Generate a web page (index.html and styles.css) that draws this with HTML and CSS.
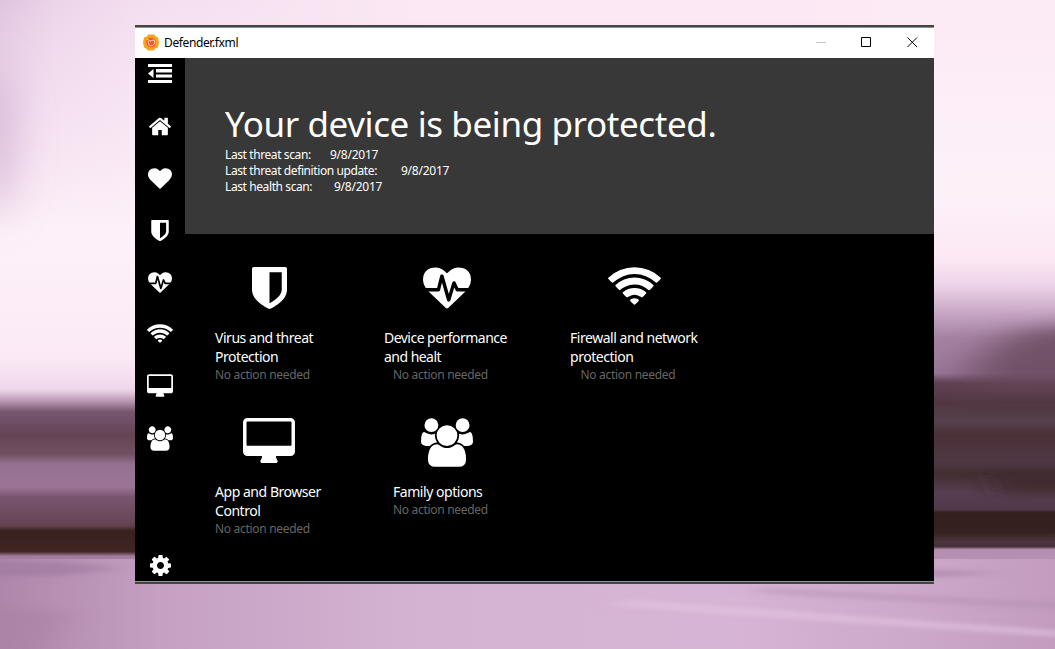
FILE: index.html
```html
<!DOCTYPE html>
<html lang="en">
<head>
<meta charset="utf-8">
<title>Defender.fxml</title>
<link rel="stylesheet" href="styles.css">
</head>
<body>
<svg width="0" height="0" class="defs" aria-hidden="true">
  <symbol id="shield" viewBox="256 128 1280 1536"><path d="M1344 960V320H896v1137q119-63 213-137 235-184 235-360zm192-768v768q0 86-33.5 170.5t-83 150-118 127.5-126.5 103-121 77.5-89.5 49.5-42.5 20q-12 6-26 6t-26-6q-16-7-42.5-20t-89.5-49.5-121-77.5-126.5-103-118-127.5-83-150T256 960V192q0-26 19-45t45-19h1152q26 0 45 19t19 45z"/></symbol>
  <symbol id="heart" viewBox="0 128 1792 1536"><path d="M896 1664q-26 0-44-18l-624-602q-10-8-27.5-26T145 952.500 77 855 23.500 734 0 596q0-220 127-344t351-124q62 0 126.500 21.500t120 58T820 276t76 68q36-36 76-68t95.500-68.500 120-58T1314 128q224 0 351 124t127 344q0 221-229 450l-623 600q-18 18-44 18z"/></symbol>
  <symbol id="pulse" viewBox="0 0 1792 1536"><path d="M1280 896h305q-5 6-10 10.500t-9 7.500l-3 4-623 600q-18 18-44 18t-44-18L228 916q-5-2-21-20h369q22 0 39.500-13.500T638 848l70-281 190 667q6 20 23 33t39 13q21 0 38-13t23-33l146-485 56 112q18 35 57 35zm512-428q0 145-103 300h-369L1210 547q-8-17-25-27t-36-8q-45 5-56 46l-129 430-196-686q-6-20-23.500-33t-39.500-13-39 13.500-22.500 34.500L526 768H103Q0 613 0 468q0-220 127-344T478 0q62 0 126.500 21.500t120 58T820 148t76 68q36-36 76-68t95.500-68.500 120-58T1314 0q224 0 351 124t127 344z"/></symbol>
  <symbol id="wifi" viewBox="42 128 1964 1395"><path d="M1024 1523q-20 0-93-73.500t-73-93.500q0-32 62.500-54t103.500-22 103.500 22 62.500 54q0 20-73 93.500t-93 73.500zm270-271q-2 0-40-25t-101.500-50-128.500-25-128.500 25-101 50-40.500 25q-18 0-93.500-75t-75.500-93q0-13 10-23 78-77 196-121t233-44 233 44 196 121q10 10 10 23 0 18-75.500 93t-93.500 75zm273-272q-11 0-23-8-136-105-252-154.500t-268-49.500q-85 0-170.500 22t-149 53T591 902t-79 53-31 25q-17 0-92-75t-75-93q0-12 10-22 132-132 320-205t380-73 380 73 320 205q10 10 10 22 0 18-75 93t-92 75zm271-271q-11 0-22-9-179-157-371.500-236.500T1024 384t-420.500 79.500T232 700q-11 9-22 9-17 0-92.500-75T42 541q0-13 10-23 187-186 445-288t527-102 527 102 445 288q10 10 10 23 0 18-75.500 93t-92.500 75z"/></symbol>
  <symbol id="desktop" viewBox="-64 0 1920 1664"><path d="M1728 992V160q0-13-9.500-22.500T1696 128H96q-13 0-22.500 9.500T64 160v832q0 13 9.500 22.500t22.500 9.500h1600q13 0 22.500-9.500t9.500-22.500zm128-832v1088q0 66-47 113t-113 47h-544q0 37 16 77.500t32 71 16 43.500q0 26-19 45t-45 19H640q-26 0-45-19t-19-45q0-14 16-44t32-70 16-78H96q-66 0-113-47t-47-113V160Q-64 94-17 47T96 0h1600q66 0 113 47t47 113z"/></symbol>
  <symbol id="users" viewBox="0 0 1920 1792"><path d="M593 896q-162 5-265 128H194q-82 0-138-40.500T0 865q0-353 124-353 6 0 43.500 21t97.500 42.500T384 597q67 0 133-23-5 37-5 66 0 139 81 256zm1071 637q0 120-73 189.500t-194 69.500H523q-121 0-194-69.500T256 1533q0-53 3.500-103.500t14-109T300 1212t43-97.500 62-81 85.500-53.500T602 960q10 0 43 21.500t73 48 107 48 135 21.500 135-21.500 107-48 73-48 43-21.500q61 0 111.500 20t85.500 53.500 62 81 43 97.500 26.500 108.500 14 109 3.500 103.500zM640 256q0 106-75 181t-181 75-181-75-75-181 75-181T384 0t181 75 75 181zm704 384q0 159-112.500 271.500T960 1024 688.500 911.500 576 640t112.500-271.500T960 256t271.500 112.500T1344 640zm576 225q0 78-56 118.500t-138 40.500h-134q-103-123-265-128 81-117 81-256 0-29-5-66 66 23 133 23 59 0 119-21.500t97.500-42.500 43.500-21q124 0 124 353zm-128-609q0 106-75 181t-181 75-181-75-75-181 75-181 181-75 181 75 75 181z"/></symbol>
  <symbol id="home" viewBox="90 256 1612 1280"><path d="M1472 992v480q0 26-19 45t-45 19h-384v-384H768v384H384q-26 0-45-19t-19-45V992q0-1 .5-3t.5-3l575-474 575 474q1 2 1 6zm223-69l-62 74q-8 9-21 11h-3q-13 0-21-7L896 424l-692 577q-12 8-24 7-13-2-21-11l-62-74q-8-10-7-23.500t11-21.500l719-599q32-26 76-26t76 26l244 204V288q0-14 9-23t23-9h192q14 0 23 9t9 23v408l219 182q10 8 11 21.500t-7 23.500z"/></symbol>
  <symbol id="cog" viewBox="128 128 1536 1536"><path d="M1152 896q0-106-75-181t-181-75-181 75-75 181 75 181 181 75 181-75 75-181zm512-109v222q0 12-8 23t-20 13l-185 28q-19 54-39 91 35 50 107 138 10 12 10 25t-9 23q-27 37-99 108t-94 71q-12 0-26-9l-138-108q-44 23-91 38-16 136-29 186-7 28-36 28H785q-14 0-24.500-8.500T749 1634l-28-184q-49-16-90-37l-141 107q-10 9-25 9-14 0-25-11-126-114-165-168-7-10-7-23 0-12 8-23 15-21 51-66.500t54-70.500q-27-50-41-99l-183-27q-13-2-21-12.500t-8-23.500V783q0-12 8-23t19-13l186-28q14-46 39-92-40-57-107-138-10-12-10-24 0-10 9-23 26-36 98.500-107.500T465 263q13 0 26 10l138 107q44-23 91-38 16-136 29-186 7-28 36-28h222q14 0 24.500 8.500T1043 158l28 184q49 16 90 37l142-107q9-9 24-9 13 0 25 10 129 119 165 170 7 8 7 22 0 12-8 23-15 21-51 66.500t-54 70.500q26 50 41 98l183 28q13 2 21 12.500t8 23.500z"/></symbol>
  <symbol id="outdent" viewBox="0 0 24 19"><path d="M0 0h24v3H0zM8 5h16v3.500H8zM8 10.500h16v3H8zM0 16h24v3H0zM5.500 5v9L0 9.500z"/></symbol>
</svg>
<svg class="wallpaper" viewBox="0 0 1055 649" preserveAspectRatio="none" aria-hidden="true">
  <defs>
    <linearGradient id="sky" x2="1" y2="0"><stop offset="0" stop-color="#e0c4df"/><stop offset=".05" stop-color="#ecd3e8"/><stop offset=".13" stop-color="#f3deef"/><stop offset=".4" stop-color="#fbe8f4"/><stop offset=".75" stop-color="#fce8f4"/><stop offset="1" stop-color="#fcedf7"/></linearGradient>
    <linearGradient id="left" x2="0" y2="1">
      <stop offset="0" stop-color="#fdf1f9" stop-opacity="0"/><stop offset=".15" stop-color="#fbeaf6" stop-opacity=".5"/><stop offset=".36" stop-color="#fdf1f9"/><stop offset=".55" stop-color="#fbeaf6"/><stop offset=".6" stop-color="#efd7eb"/><stop offset=".617" stop-color="#bd9bb8"/><stop offset=".634" stop-color="#765770"/><stop offset=".67" stop-color="#644454"/><stop offset=".7" stop-color="#735164"/><stop offset=".715" stop-color="#957191"/><stop offset=".75" stop-color="#9c7596"/><stop offset=".765" stop-color="#7b5670"/><stop offset=".81" stop-color="#644252"/><stop offset=".818" stop-color="#39211f"/><stop offset=".85" stop-color="#402523"/><stop offset=".857" stop-color="#a37c9e"/><stop offset="1" stop-color="#b990b6"/>
    </linearGradient>
    <linearGradient id="right" x2="0" y2="1">
      <stop offset="0" stop-color="#fceaf5"/><stop offset=".3" stop-color="#fdf1f8"/><stop offset=".4" stop-color="#fce8f4"/><stop offset=".44" stop-color="#edd3e8"/><stop offset=".48" stop-color="#c9a9c7"/><stop offset=".52" stop-color="#a583a4"/><stop offset=".575" stop-color="#9b789b"/><stop offset=".59" stop-color="#5e4153"/><stop offset=".62" stop-color="#513742"/><stop offset=".65" stop-color="#56404b"/><stop offset=".67" stop-color="#4a3037"/><stop offset=".71" stop-color="#503843"/><stop offset=".73" stop-color="#432e32"/><stop offset=".76" stop-color="#573e50"/><stop offset=".785" stop-color="#523849"/><stop offset=".79" stop-color="#33201e"/><stop offset=".82" stop-color="#35211f"/><stop offset=".835" stop-color="#4e3541"/><stop offset=".842" stop-color="#452f38"/><stop offset=".847" stop-color="#b48fb2"/><stop offset="1" stop-color="#c7a0c4"/>
    </linearGradient>
    <linearGradient id="ground" x2="1" y2="0"><stop offset="0" stop-color="#ae86ab"/><stop offset=".15" stop-color="#c5a0c3"/><stop offset=".4" stop-color="#d4b3d2"/><stop offset=".7" stop-color="#d6b4d5"/><stop offset=".88" stop-color="#cba7ca"/><stop offset="1" stop-color="#c39cc0"/></linearGradient>
    <filter id="soft" filterUnits="userSpaceOnUse" x="-200" y="-100" width="1500" height="900"><feGaussianBlur stdDeviation="22"/></filter>
    <filter id="streak" filterUnits="userSpaceOnUse" x="-100" y="200" width="1300" height="500"><feGaussianBlur stdDeviation="14 2.500"/></filter>
    <filter id="haze" filterUnits="userSpaceOnUse" x="800" y="200" width="500" height="300"><feGaussianBlur stdDeviation="26 9"/></filter>
  </defs>
  <path fill="url(#sky)" d="M0 0h1055v649H0z"/>
  <path fill="url(#left)" d="M0 0h300v649H0z"/>
  <path fill="url(#right)" d="M934 0h121v649H934z"/>
  <ellipse cx="-8" cy="140" rx="20" ry="75" fill="#c9a5c9" opacity=".7" filter="url(#soft)"/>
  <path fill="#654758" opacity=".8" filter="url(#haze)" d="M1160 318L1020 330 980 355 960 390h200z"/>
  <path fill="url(#ground)" d="M0 559h1055v90H0z"/>
  <g filter="url(#streak)">
    <path fill="#3c2623" opacity=".6" d="M990 475h120v20H1000z"/>
    <path fill="#a07a9f" opacity=".7" d="M-40 562H60l60 6-60 8H-40zM920 570l80 3-80 4z"/>
    <path fill="#a981a6" opacity=".55" d="M-40 605l110 8-40 50H-40z"/>
    <path fill="#b38db1" opacity=".6" d="M760 588l310 16v5L760 593z"/>
    <path fill="#e3c4e1" opacity=".75" d="M620 600l450 32v5L620 606z"/>
  </g>
</svg>
<main class="window">
  <header class="titlebar">
    <svg class="logo" viewBox="0 0 16 17"><path fill="#f5a51d" d="M5 .5h6l2 2 2 1 1 5-1 5-3 1-1 2H5l-2-2-2-1-1-5 1-5 3-1z"/><circle cx="8" cy="8.500" r="4.800" fill="#ef5a24"/><path fill="none" stroke="#fbe3d2" stroke-width=".9" d="M4 5l3 2 4-1 1 3-3 3-3-1-1-4"/></svg>
    <span class="title">Defender.fxml</span>
    <svg class="controls" viewBox="0 0 102 12" fill="none"><path stroke="#c6c6c6" d="M0 6.500h10"/><path stroke="#000" d="M45.500 1.500h9v9h-9z"/><path stroke="#000" d="M91.500 1.500l9.500 9.500M101 1.500L91.500 11"/></svg>
  </header>
  <div class="content">
    <nav class="sidebar">
      <a class="item raised"><svg width="24" height="19"><use href="#outdent"/></svg></a>
      <a class="item"><svg width="22" height="19"><use href="#home"/></svg></a>
      <a class="item"><svg width="24" height="21"><use href="#heart"/></svg></a>
      <a class="item"><svg width="18" height="21"><use href="#shield"/></svg></a>
      <a class="item"><svg width="24" height="21"><use href="#pulse"/></svg></a>
      <a class="item raised"><svg width="26" height="19"><use href="#wifi"/></svg></a>
      <a class="item raised"><svg width="26" height="23"><use href="#desktop"/></svg></a>
      <a class="item"><svg width="26" height="25"><use href="#users"/></svg></a>
      <a class="item settings"><svg width="21" height="21"><use href="#cog"/></svg></a>
    </nav>
    <div class="page">
      <section class="hero">
        <h1 class="headline">Your device is being protected.</h1>
        <div class="scan"><span class="w85">Last threat scan:</span><span class="date gap-s">9/8/2017</span></div>
        <div class="scan"><span class="w153">Last threat definition update:</span><span class="date gap-l">9/8/2017</span></div>
        <div class="scan"><span class="w86">Last health scan:</span><span class="date gap-l">9/8/2017</span></div>
      </section>
      <section class="tiles">
        <article class="tile"><div class="art"><svg width="35" height="42"><use href="#shield"/></svg></div><h2 class="name">Virus and threat<br>Protection</h2><p class="status">No action needed</p></article>
        <article class="tile"><div class="art"><svg width="48" height="42"><use href="#pulse"/></svg></div><h2 class="name device">Device performance<br>and healt</h2><p class="status">No action needed</p></article>
        <article class="tile"><div class="art"><svg width="53" height="38"><use href="#wifi"/></svg></div><h2 class="name firewall">Firewall and network<br>protection</h2><p class="status">No action needed</p></article>
        <article class="tile"><div class="art tall"><svg width="52" height="45"><use href="#desktop"/></svg></div><h2 class="name">App and Browser<br>Control</h2><p class="status">No action needed</p></article>
        <article class="tile"><div class="art tall"><svg width="52" height="49"><use href="#users"/></svg></div><h2 class="name">Family options</h2><p class="status">No action needed</p></article>
      </section>
    </div>
  </div>
</main>
</body>
</html>
```

FILE: styles.css
```css
* { box-sizing: border-box; }
body { margin: 0; width: 1055px; height: 649px; overflow: hidden; padding: 25px 0 0 135px; font-family: "Noto Sans", "Open Sans", sans-serif; }
.defs { position: absolute; }
.wallpaper { position: absolute; inset: 0; width: 1055px; height: 649px; z-index: -1; }
.window { width: 799px; height: 559px; display: flex; flex-direction: column; border-top: 2px solid #48414a; border-bottom: 2px solid #48414a; }
.titlebar { height: 31px; flex: none; display: flex; align-items: center; padding: 0 16px 2px 8px; background: #fff; border-top: 1px solid #82a35c; }
.logo { width: 16px; height: 17px; }
.title { margin-left: 5px; font-size: 12px; letter-spacing: -.38px; color: #000; }
.controls { width: 102px; height: 12px; margin-left: auto; }
.content { flex: 1; display: flex; background: #000; border-bottom: 1px solid #82a35c; color: #fff; }
svg { fill: #fff; flex: none; }
.sidebar { width: 50px; display: flex; flex-direction: column; gap: 20px; }
.item { height: 32px; display: flex; align-items: center; justify-content: center; }
.raised { padding-bottom: 2px; }
.settings { margin-top: auto; }
.page { flex: 1; }
.hero { height: 176px; background: #383838; padding: 42px 40px 0; }
.headline { margin: 0; height: 47px; line-height: 48px; font-size: 35px; font-weight: 400; white-space: nowrap; letter-spacing: -.4px; }
.scan { display: flex; height: 16px; line-height: 16px; font-size: 12px; letter-spacing: -.4px; white-space: nowrap; }
.date { letter-spacing: -.25px; }
.w85 { width: 85px; }
.w153 { width: 153px; }
.w86 { width: 86px; }
.gap-s { margin-left: 20px; }
.gap-l { margin-left: 23px; }
.tiles { display: grid; grid-template-columns: 108px 128px 127px; column-gap: 60px; grid-template-rows: 151px 140px; padding: 33px 0 0 30px; }
.tile { display: flex; flex-direction: column; align-items: center; }
.art { height: 61px; }
.tall { height: 64px; }
.name { width: 108px; margin: 0; font-size: 14px; font-weight: 400; line-height: 19px; letter-spacing: -.46px; white-space: nowrap; }
.device { width: 126px; letter-spacing: -.53px; }
.firewall { width: 129px; }
.status { width: 108px; margin: 1px 0 0; font-size: 12px; line-height: 16px; letter-spacing: -.3px; color: #666; white-space: nowrap; }
```
